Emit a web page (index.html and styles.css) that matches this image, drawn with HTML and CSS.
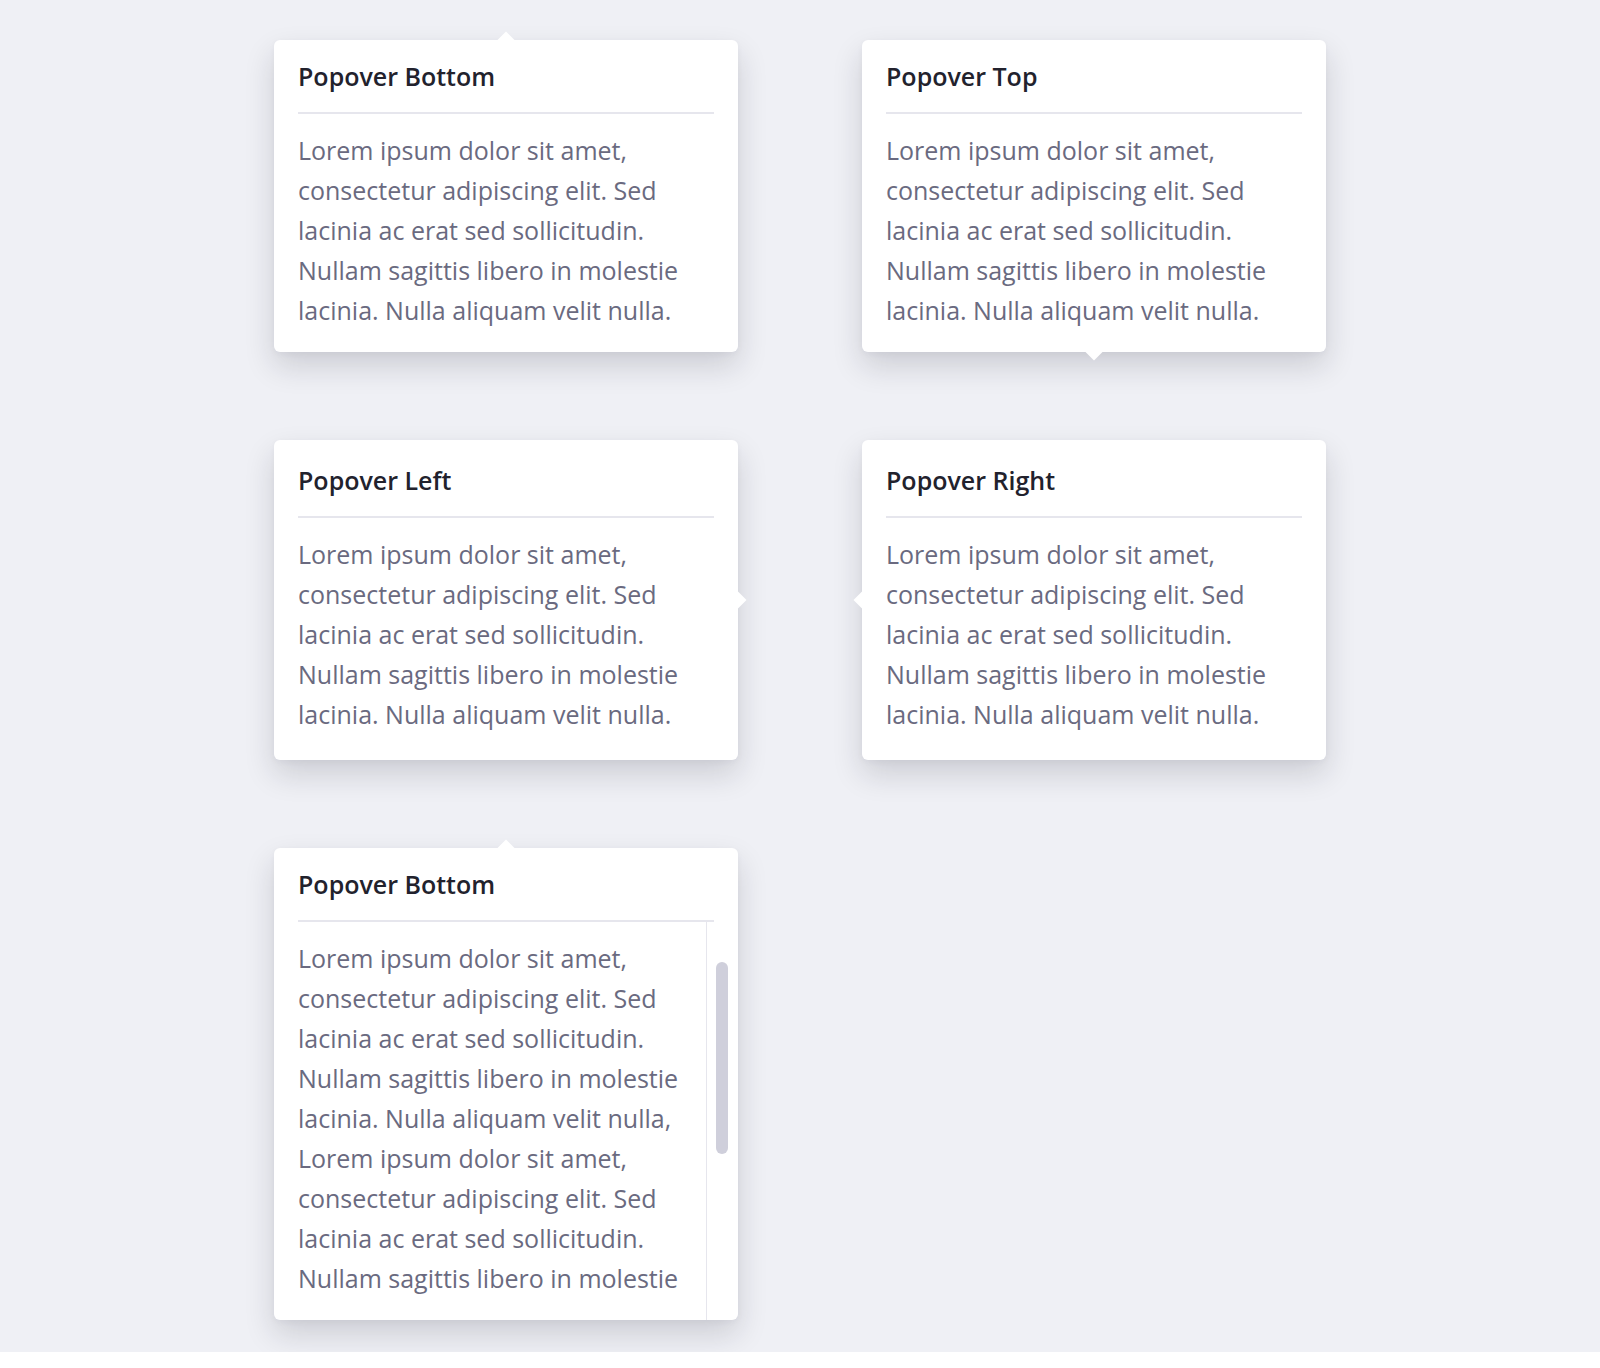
FILE: index.html
```html
<!DOCTYPE html>
<html lang="en">
<head>
<meta charset="utf-8">
<title>Popovers</title>
<link rel="stylesheet" href="styles.css">
</head>
<body>
<main class="page">
  <div class="grid">
    <section class="popover popover--bottom">
      <h3 class="popover__title">Popover Bottom</h3>
      <div class="popover__body">
        <p>Lorem ipsum dolor sit amet, consectetur adipiscing elit. Sed lacinia ac erat sed sollicitudin. Nullam sagittis libero in molestie lacinia. Nulla aliquam velit nulla.</p>
      </div>
    </section>
    <section class="popover popover--top">
      <h3 class="popover__title">Popover Top</h3>
      <div class="popover__body">
        <p>Lorem ipsum dolor sit amet, consectetur adipiscing elit. Sed lacinia ac erat sed sollicitudin. Nullam sagittis libero in molestie lacinia. Nulla aliquam velit nulla.</p>
      </div>
    </section>
    <section class="popover popover--left popover--side">
      <h3 class="popover__title">Popover Left</h3>
      <div class="popover__body">
        <p>Lorem ipsum dolor sit amet, consectetur adipiscing elit. Sed lacinia ac erat sed sollicitudin. Nullam sagittis libero in molestie lacinia. Nulla aliquam velit nulla.</p>
      </div>
    </section>
    <section class="popover popover--right popover--side">
      <h3 class="popover__title">Popover Right</h3>
      <div class="popover__body">
        <p>Lorem ipsum dolor sit amet, consectetur adipiscing elit. Sed lacinia ac erat sed sollicitudin. Nullam sagittis libero in molestie lacinia. Nulla aliquam velit nulla.</p>
      </div>
    </section>
    <section class="popover popover--bottom popover--scroll">
      <h3 class="popover__title">Popover Bottom</h3>
      <div class="popover__scroll">
        <div class="popover__scroll-content">
          <div class="popover__viewport">
            <p>Lorem ipsum dolor sit amet, consectetur adipiscing elit. Sed lacinia ac erat sed sollicitudin. Nullam sagittis libero in molestie lacinia. Nulla aliquam velit nulla, Lorem ipsum dolor sit amet, consectetur adipiscing elit. Sed lacinia ac erat sed sollicitudin. Nullam sagittis libero in molestie</p>
          </div>
        </div>
        <div class="scrollbar" aria-hidden="true">
          <div class="scrollbar__thumb"></div>
        </div>
      </div>
    </section>
  </div>
</main>
</body>
</html>
```
FILE: styles.css
```css
html, body {
  margin: 0;
  padding: 0;
  background: #ffffff;
}

body {
  font-family: "Open Sans", "Noto Sans", sans-serif;
}

.page {
  background: #eff0f5;
  padding: 40px 0 32px;
}

.grid {
  display: grid;
  grid-template-columns: 464px 464px;
  column-gap: 124px;
  row-gap: 88px;
  justify-content: center;
  align-items: start;
}

.popover {
  position: relative;
  background: #ffffff;
  border-radius: 6px;
  padding: 24px 24px 0;
  box-shadow: 0 14px 30px rgba(24, 26, 44, 0.16), 0 2px 6px rgba(24, 26, 44, 0.04);
}

.popover::before {
  content: "";
  position: absolute;
  width: 12px;
  height: 12px;
  background: #ffffff;
  transform: rotate(45deg);
}

.popover--bottom::before {
  top: -6px;
  left: calc(50% - 6px);
}

.popover--top::before {
  bottom: -6px;
  left: calc(50% - 6px);
}

.popover--left::before {
  right: -6px;
  top: calc(50% - 6px);
}

.popover--right::before {
  left: -6px;
  top: calc(50% - 6px);
}

.popover--side {
  padding-top: 28px;
}

.popover__title {
  margin: 0;
  padding-bottom: 24px;
  border-bottom: 2px solid #e6e6ed;
  font-size: 25px;
  line-height: 24px;
  font-weight: 600;
  color: #22222d;
}

.popover__body,
.popover__viewport {
  font-size: 25px;
  line-height: 40px;
  color: #6a6a80;
}

.popover__body {
  padding: 16px 0 22px;
}

.popover--side .popover__body {
  padding-bottom: 26px;
}

.popover__body p,
.popover__viewport p {
  margin: 0;
}

.popover__scroll {
  display: flex;
  height: 398px;
  margin-right: -24px;
}

.popover__scroll-content {
  flex: 1 1 auto;
  min-width: 0;
  padding-top: 16px;
}

.popover__viewport {
  height: 360px;
  overflow-y: auto;
  scrollbar-width: none;
}

.scrollbar {
  flex: 0 0 32px;
  box-sizing: border-box;
  border-left: 1px solid #e6e6ed;
  padding: 40px 0 0 9px;
}

.scrollbar__thumb {
  width: 12px;
  height: 192px;
  border-radius: 6px;
  background: #cfcfdb;
}
```
